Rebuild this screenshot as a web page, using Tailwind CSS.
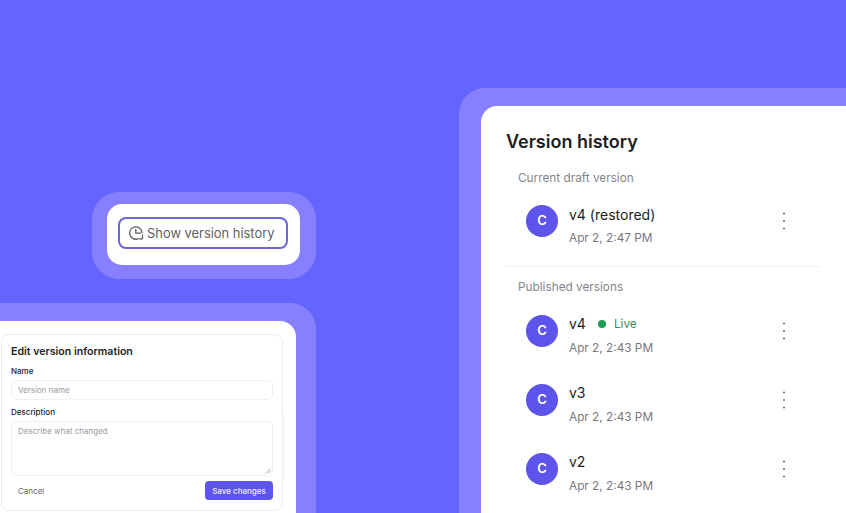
<!DOCTYPE html>
<html lang="en">
<head>
<meta charset="UTF-8">
<title>Version history</title>
<script src="https://cdn.jsdelivr.net/npm/@tailwindcss/browser@4"></script>
</head>
<body class="font-['Inter',sans-serif]">
<div class="relative w-[846px] h-[513px] overflow-hidden bg-[#6464ff]">

    <!-- Show version history button -->
    <div class="absolute left-[92px] top-[192px] w-[224px] h-[87px] rounded-[27px] bg-[#8680ff] pl-[15px] pr-[16px] pt-[12px] pb-[14px]">
        <div class="h-full rounded-[15px] bg-white pl-[11px] pr-[12px] pt-[13px] pb-[16px]">
            <div class="flex h-[32px] items-center gap-[2px] rounded-[8px] border-2 border-[#6f66d8] pl-[7px]">
                <svg class="w-[18px] h-[18px] shrink-0" viewBox="0 0 18 18" fill="none" stroke="#5f5f66" stroke-width="1.3" stroke-linecap="round" stroke-linejoin="round">
                    <path d="M15 8.5A6.2 6.2 0 1 0 10.5 15"/>
                    <path d="M8.8 5.5V9.2H13.5"/>
                    <path d="M15.5 11.2V14.8H11.8"/>
                </svg>
                <span class="pt-[2px] text-[12.9px] leading-none text-[#5f5f66] whitespace-nowrap">Show version history</span>
            </div>
        </div>
    </div>

    <!-- Edit version form -->
    <div class="absolute left-[-30px] top-[303px] w-[346px] h-[240px] rounded-[26px] bg-[#8680ff] pl-[30px] pr-[20px] pt-[18px]">
        <div class="relative h-full rounded-tr-[16px] bg-white pl-[1px] pt-[13px]">
            <!-- faint card peeking out behind the form -->
            <div class="absolute left-[200px] top-[84px] w-[85px] h-[80px] rounded-[14px] bg-[#f8f8f9]"></div>
            <div class="relative flex flex-col w-[282px] h-[177px] rounded-[8px] border border-[#ececf0] bg-white pl-[9px] pr-[9px] pt-[9px] text-[#1e1e24]">
                <h3 class="text-[10.6px] leading-[16px] font-semibold">Edit version information</h3>
                <label class="mt-[5px] text-[8px] leading-[12px] font-medium">Name</label>
                <div class="mt-[3px] flex h-[20px] items-center rounded-[5px] border border-[#f0f0f3] px-[6px] text-[8px] text-[#9b9ba1]">Version name</div>
                <label class="mt-[6px] text-[8px] leading-[12px] font-medium">Description</label>
                <div class="relative mt-[3px] h-[55px] rounded-[5px] border border-[#f0f0f3] px-[6px] pt-[3px] text-[8px] leading-[12px] text-[#9b9ba1]">
                    Describe what changed
                    <svg class="absolute right-[1px] bottom-[1px] w-[6px] h-[6px]" viewBox="0 0 6 6" fill="none" stroke="#77777c" stroke-width="0.6"><path d="M0.5 5.5L5.5 0.5M3 5.5L5.5 3"/></svg>
                </div>
                <div class="mt-[5px] flex items-center justify-between">
                    <span class="pl-[7px] text-[8px] text-[#66666c]">Cancel</span>
                    <span class="flex h-[19px] w-[68px] items-center justify-center rounded-[4px] bg-[#5c54eb] text-[8px] font-medium text-white/90">Save changes</span>
                </div>
            </div>
        </div>
    </div>

    <!-- Version history panel -->
    <div class="absolute left-[459px] top-[88px] w-[420px] h-[460px] rounded-[26px] bg-[#8680ff] pl-[22px] pt-[18px]">
        <div class="h-full rounded-tl-[16px] bg-white pl-[25px] pt-[25px] text-[#1d1d23]">
            <h2 class="text-[18px] leading-[22px] font-semibold">Version history</h2>
            <div class="mt-[17px] ml-[12px] text-[11.8px] leading-[16px] text-[#85858b]">Current draft version</div>

            <div class="mt-[16px] flex h-[48px] w-[260px] ml-[20px]">
                <div class="mt-[3px] flex h-[32px] w-[32px] items-center justify-center rounded-full bg-[#5c54eb] text-[13px] font-semibold text-white">C</div>
                <div class="ml-[11px] flex-1 pt-[4px]">
                    <div class="text-[14px] leading-[18px]">v4 (restored)</div>
                    <div class="mt-[6px] text-[11.8px] leading-[16px] text-[#77777d]">Apr 2, 2:47 PM</div>
                </div>
                <svg class="mt-[10px] w-[4px] h-[18px]" viewBox="0 0 4 18" fill="#66666c"><circle cx="2" cy="1.5" r="1"/><circle cx="2" cy="9" r="1"/><circle cx="2" cy="16.5" r="1"/></svg>
            </div>

            <div class="mt-[16px] h-px w-[314px] bg-[#f0f0f2]"></div>
            <div class="mt-[12px] ml-[12px] text-[11.8px] leading-[16px] text-[#85858b]">Published versions</div>

            <div class="mt-[17px] flex h-[48px] w-[260px] ml-[20px]">
                <div class="mt-[3px] flex h-[32px] w-[32px] items-center justify-center rounded-full bg-[#5c54eb] text-[13px] font-semibold text-white">C</div>
                <div class="ml-[11px] flex-1 pt-[3px]">
                    <div class="flex items-center text-[14px] leading-[18px]">v4
                        <span class="ml-[12px] h-[8px] w-[8px] rounded-full bg-[#1f9d55]"></span>
                        <span class="ml-[8px] text-[11.8px] text-[#3a8a5f]">Live</span>
                    </div>
                    <div class="mt-[7px] text-[11.8px] leading-[16px] text-[#77777d]">Apr 2, 2:43 PM</div>
                </div>
                <svg class="mt-[10px] w-[4px] h-[18px]" viewBox="0 0 4 18" fill="#66666c"><circle cx="2" cy="1.5" r="1"/><circle cx="2" cy="9" r="1"/><circle cx="2" cy="16.5" r="1"/></svg>
            </div>

            <div class="mt-[21px] flex h-[48px] w-[260px] ml-[20px]">
                <div class="mt-[3px] flex h-[32px] w-[32px] items-center justify-center rounded-full bg-[#5c54eb] text-[13px] font-semibold text-white">C</div>
                <div class="ml-[11px] flex-1 pt-[3px]">
                    <div class="text-[14px] leading-[18px]">v3</div>
                    <div class="mt-[7px] text-[11.8px] leading-[16px] text-[#77777d]">Apr 2, 2:43 PM</div>
                </div>
                <svg class="mt-[10px] w-[4px] h-[18px]" viewBox="0 0 4 18" fill="#66666c"><circle cx="2" cy="1.5" r="1"/><circle cx="2" cy="9" r="1"/><circle cx="2" cy="16.5" r="1"/></svg>
            </div>

            <div class="mt-[21px] flex h-[48px] w-[260px] ml-[20px]">
                <div class="mt-[3px] flex h-[32px] w-[32px] items-center justify-center rounded-full bg-[#5c54eb] text-[13px] font-semibold text-white">C</div>
                <div class="ml-[11px] flex-1 pt-[3px]">
                    <div class="text-[14px] leading-[18px]">v2</div>
                    <div class="mt-[7px] text-[11.8px] leading-[16px] text-[#77777d]">Apr 2, 2:43 PM</div>
                </div>
                <svg class="mt-[10px] w-[4px] h-[18px]" viewBox="0 0 4 18" fill="#66666c"><circle cx="2" cy="1.5" r="1"/><circle cx="2" cy="9" r="1"/><circle cx="2" cy="16.5" r="1"/></svg>
            </div>
        </div>
    </div>
</div>
</body>
</html>
